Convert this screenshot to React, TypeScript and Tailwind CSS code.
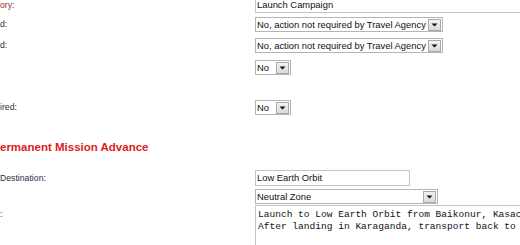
import React from 'react'

function Arrow() {
  return (
    <span className="ml-auto flex h-[12px] w-[13px] shrink-0 items-center justify-center border border-[#a9a9a9] bg-gradient-to-b from-[#f4f4f4] to-[#d9d9d9]">
      <svg width="7" height="4" viewBox="0 0 7 4">
        <path d="M0.5 0.5 L6.5 0.5 L3.5 3.5 Z" fill="#111" />
      </svg>
    </span>
  )
}

function Select({ value, width }: { value: string; width: string }) {
  return (
    <div
      className={`flex h-[15px] items-center border border-[#b5b5b5] bg-white pl-[1px] pr-[1px] text-[9.4px] text-[#111] ${width}`}
    >
      <span className="whitespace-nowrap leading-none">{value}</span>
      <Arrow />
    </div>
  )
}

function Row({
  label,
  tone = 'text-[#2e2e44]',
  className = '',
  children,
}: {
  label?: string
  tone?: string
  className?: string
  children: React.ReactNode
}) {
  return (
    <div className={`grid grid-cols-[255px_1fr] items-center ${className}`}>
      <span className={`text-[8.7px] leading-none ${tone}`}>{label}</span>
      <div className="flex">{children}</div>
    </div>
  )
}

export default function App() {
  return (
    <div className="h-[245px] w-[520px] overflow-hidden bg-white font-['Liberation_Sans',Arial,sans-serif]">
      <Row label="ory:" tone="text-[#9b2b2b]" className="-mt-[3px]">
        <div className="flex h-[16px] w-[300px] items-center border border-[#c4c4c4] pl-[1px] text-[9.4px] text-[#111]">
          Launch Campaign
        </div>
      </Row>

      <Row label="d:" className="mt-[4px]">
        <Select value="No, action not required by Travel Agency" width="w-[188px]" />
      </Row>

      <Row label="d:" className="mt-[6px]">
        <Select value="No, action not required by Travel Agency" width="w-[188px]" />
      </Row>

      <Row className="mt-[7px]">
        <Select value="No" width="w-[36px]" />
      </Row>

      <Row label="ired:" className="mt-[25px]">
        <Select value="No" width="w-[36px]" />
      </Row>

      <h2 className="mt-[25px] text-[11.5px] font-bold leading-[14px] text-[#e01b1b]">
        ermanent Mission Advance
      </h2>

      <Row label="Destination:" className="mt-[16px]">
        <div className="flex h-[16px] w-[155px] items-center border border-[#c4c4c4] pl-[1px] text-[9.4px] text-[#111]">
          Low Earth Orbit
        </div>
      </Row>

      <Row className="mt-[3px]">
        <Select value="Neutral Zone" width="w-[183px]" />
      </Row>

      <div className="mt-[1px] grid grid-cols-[255px_1fr] items-start">
        <span className="pt-[5px] text-[8.7px] leading-none text-[#2e2e44]">:</span>
        <div className="h-[60px] w-[300px] whitespace-pre border border-[#c4c4c4] pl-[2px] pt-[3px] font-['Liberation_Mono','Courier_New',monospace] text-[9.55px] leading-[12px] text-[#111]">
          {'Launch to Low Earth Orbit from Baikonur, Kasachstan.\nAfter landing in Karaganda, transport back to Baikonur.'}
        </div>
      </div>
    </div>
  )
}
